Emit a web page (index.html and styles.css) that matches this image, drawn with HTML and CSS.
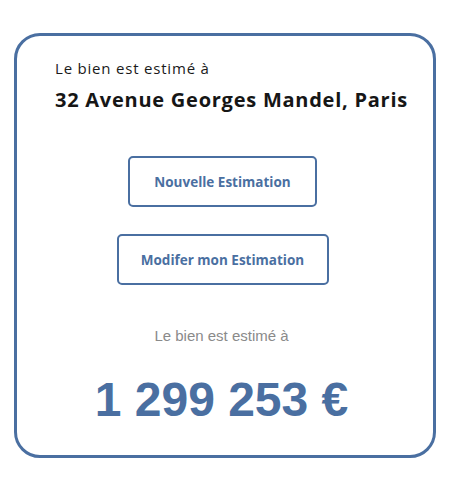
FILE: index.html
```html
<!DOCTYPE html>
<html lang="fr">
<head>
<meta charset="utf-8">
<title>Estimation</title>
<link rel="stylesheet" href="styles.css">
</head>
<body>
<main class="page">
  <section class="card">
    <header class="card-head">
      <p class="intro">Le bien est estimé à</p>
      <h1 class="address">32 Avenue Georges Mandel, Paris</h1>
    </header>
    <div class="actions">
      <button class="btn btn-new" type="button">Nouvelle Estimation</button>
      <button class="btn btn-edit" type="button">Modifer mon Estimation</button>
    </div>
    <div class="result">
      <p class="result-label">Le bien est estimé à</p>
      <p class="price">1 299 253 €</p>
    </div>
  </section>
</main>
</body>
</html>
```

FILE: styles.css
```css
html, body {
  margin: 0;
  padding: 0;
  background: #ffffff;
}

.page {
  padding: 33px 14px 0 14px;
}

.card {
  box-sizing: border-box;
  height: 425px;
  border: 3px solid #4a6fa1;
  border-radius: 26px;
  padding: 0 20px 0 38px;
  display: flex;
  flex-direction: column;
}

.card-head {
  padding-top: 22px;
}

.intro {
  margin: 0;
  font-family: "Open Sans", sans-serif;
  font-size: 15px;
  line-height: 20px;
  letter-spacing: 0.8px;
  color: #1a1a1a;
}

.address {
  margin: 9px 0 0 0;
  font-family: "Open Sans", sans-serif;
  font-weight: 700;
  font-size: 20px;
  line-height: 26px;
  letter-spacing: 0.75px;
  color: #161616;
}

.actions {
  display: flex;
  flex-direction: column;
  align-items: center;
  gap: 27px;
  margin: 43px 23px 0 0;
}

.btn {
  box-sizing: border-box;
  height: 51px;
  background: #ffffff;
  border: 2px solid #4a6fa1;
  border-radius: 5px;
  font-family: "Open Sans", sans-serif;
  font-weight: 700;
  font-size: 13.5px;
  color: #4a6fa1;
  cursor: pointer;
}

.btn-new {
  width: 189px;
}

.btn-edit {
  width: 212px;
}

.result {
  display: flex;
  flex-direction: column;
  align-items: center;
  margin-right: 25px;
}

.result-label {
  margin: 42px 0 0 0;
  font-family: "Liberation Sans", Arial, sans-serif;
  font-size: 15px;
  line-height: 18px;
  color: #8a8a8a;
}

.price {
  margin: 27px 0 0 0;
  font-family: "Liberation Sans", Arial, sans-serif;
  font-weight: 700;
  font-size: 48px;
  line-height: 56px;
  color: #4a6fa1;
}
```
